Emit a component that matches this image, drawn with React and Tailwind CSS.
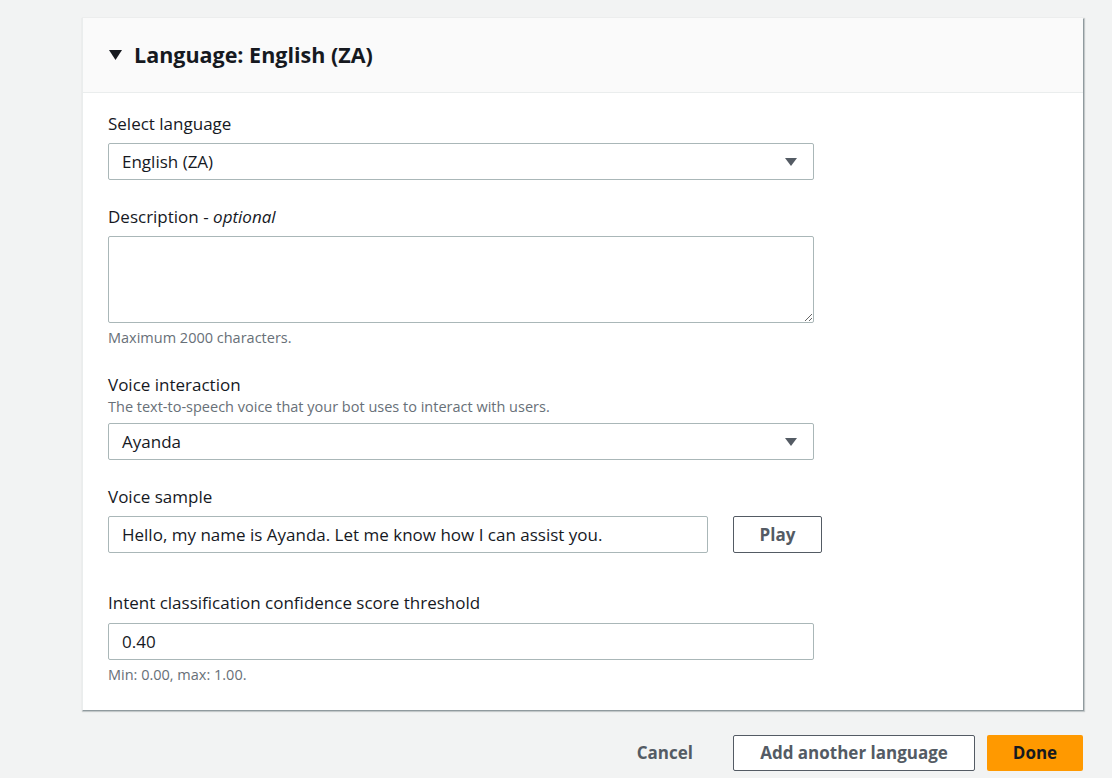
import {useState} from "react";

const font = {fontFamily: '"Open Sans", "Noto Sans", Arial, sans-serif'};

function Caret({className}) {
    return (
        <svg width="12" height="8" viewBox="0 0 12 8" className={className}>
            <path d="M0 0h12L6 8z" fill="currentColor"/>
        </svg>
    );
}

function Label({children}) {
    return <div className="text-[17px] leading-[22px] text-[#16191f]">{children}</div>;
}

function Hint({children}) {
    return <div className="text-[14.5px] leading-[18px] text-[#687078]">{children}</div>;
}

function SelectBox({value}) {
    return (
        <div className="flex items-center justify-between w-[706px] h-[37px] border border-[#aab7b8] rounded-[2px] bg-white pl-[13px] pr-[16px]">
            <span className="text-[17px] text-[#16191f]">{value}</span>
            <Caret className="text-[#545b64]"/>
        </div>
    );
}

function TextInput({value, width = "w-[706px]"}) {
    return (
        <div className={`${width} h-[37px] flex items-center border border-[#aab7b8] rounded-[2px] bg-white pl-[13px]`}>
            <span className="text-[17px] text-[#16191f]">{value}</span>
        </div>
    );
}

export default function App() {
    const [desc, setDesc] = useState("");

    return (
        <div className="w-[1112px] h-[778px] bg-[#f2f3f3] overflow-hidden" style={font}>
            <div className="pt-[18px] pl-[82px] pr-[29px]">
                <div className="bg-white border-l border-[#eaeded] shadow-[1px_1px_1px_0_rgba(0,28,36,0.3),1px_1px_1px_1px_rgba(0,28,36,0.15)]">
                    <div className="h-[75px] bg-[#fafafa] border-b border-[#eaeded] flex items-center pl-[26px] gap-[12px]">
                        <svg width="13" height="10" viewBox="0 0 13 10" className="text-[#16191f]">
                            <path d="M0 0h13L6.5 10z" fill="currentColor"/>
                        </svg>
                        <span className="text-[21.5px] font-bold text-[#16191f]">Language: English (ZA)</span>
                    </div>

                    <div className="pl-[25px] pt-[20px] pb-[26px]">
                        <Label>Select language</Label>
                        <div className="mt-[8px]"><SelectBox value="English (ZA)"/></div>

                        <div className="mt-[26px]">
                            <Label>Description - <i>optional</i></Label>
                        </div>
                        <textarea
                            value={desc}
                            onChange={(e) => setDesc(e.target.value)}
                            className="block mt-[8px] w-[706px] h-[87px] border border-[#aab7b8] rounded-[2px] bg-white outline-none"
                        />
                        <div className="mt-[6px]"><Hint>Maximum 2000 characters.</Hint></div>

                        <div className="mt-[27px]">
                            <Label>Voice interaction</Label>
                        </div>
                        <div className="mt-[2px]"><Hint>The text-to-speech voice that your bot uses to interact with users.</Hint></div>
                        <div className="mt-[7px]"><SelectBox value="Ayanda"/></div>

                        <div className="mt-[26px]">
                            <Label>Voice sample</Label>
                        </div>
                        <div className="mt-[8px] flex items-center gap-[25px]">
                            <TextInput width="w-[600px]" value="Hello, my name is Ayanda. Let me know how I can assist you."/>
                            <button className="w-[89px] h-[37px] border border-[#545b64] rounded-[2px] bg-white text-[17px] font-bold text-[#545b64]">
                                Play
                            </button>
                        </div>

                        <div className="mt-[39px]">
                            <Label>Intent classification confidence score threshold</Label>
                        </div>
                        <div className="mt-[9px]"><TextInput value="0.40"/></div>
                        <div className="mt-[6px]"><Hint>Min: 0.00, max: 1.00.</Hint></div>
                    </div>
                </div>

                <div className="flex justify-end items-center mt-[25px] gap-[12px]">
                    <button className="h-[36px] px-[20px] text-[17px] font-bold text-[#545b64] mr-[8px]">Cancel</button>
                    <button className="w-[242px] h-[36px] border border-[#545b64] rounded-[2px] bg-white text-[17px] font-bold text-[#545b64]">
                        Add another language
                    </button>
                    <button className="w-[96px] h-[36px] rounded-[2px] bg-[#ff9900] text-[17px] font-bold text-[#16191f]">
                        Done
                    </button>
                </div>
            </div>
        </div>
    );
}
